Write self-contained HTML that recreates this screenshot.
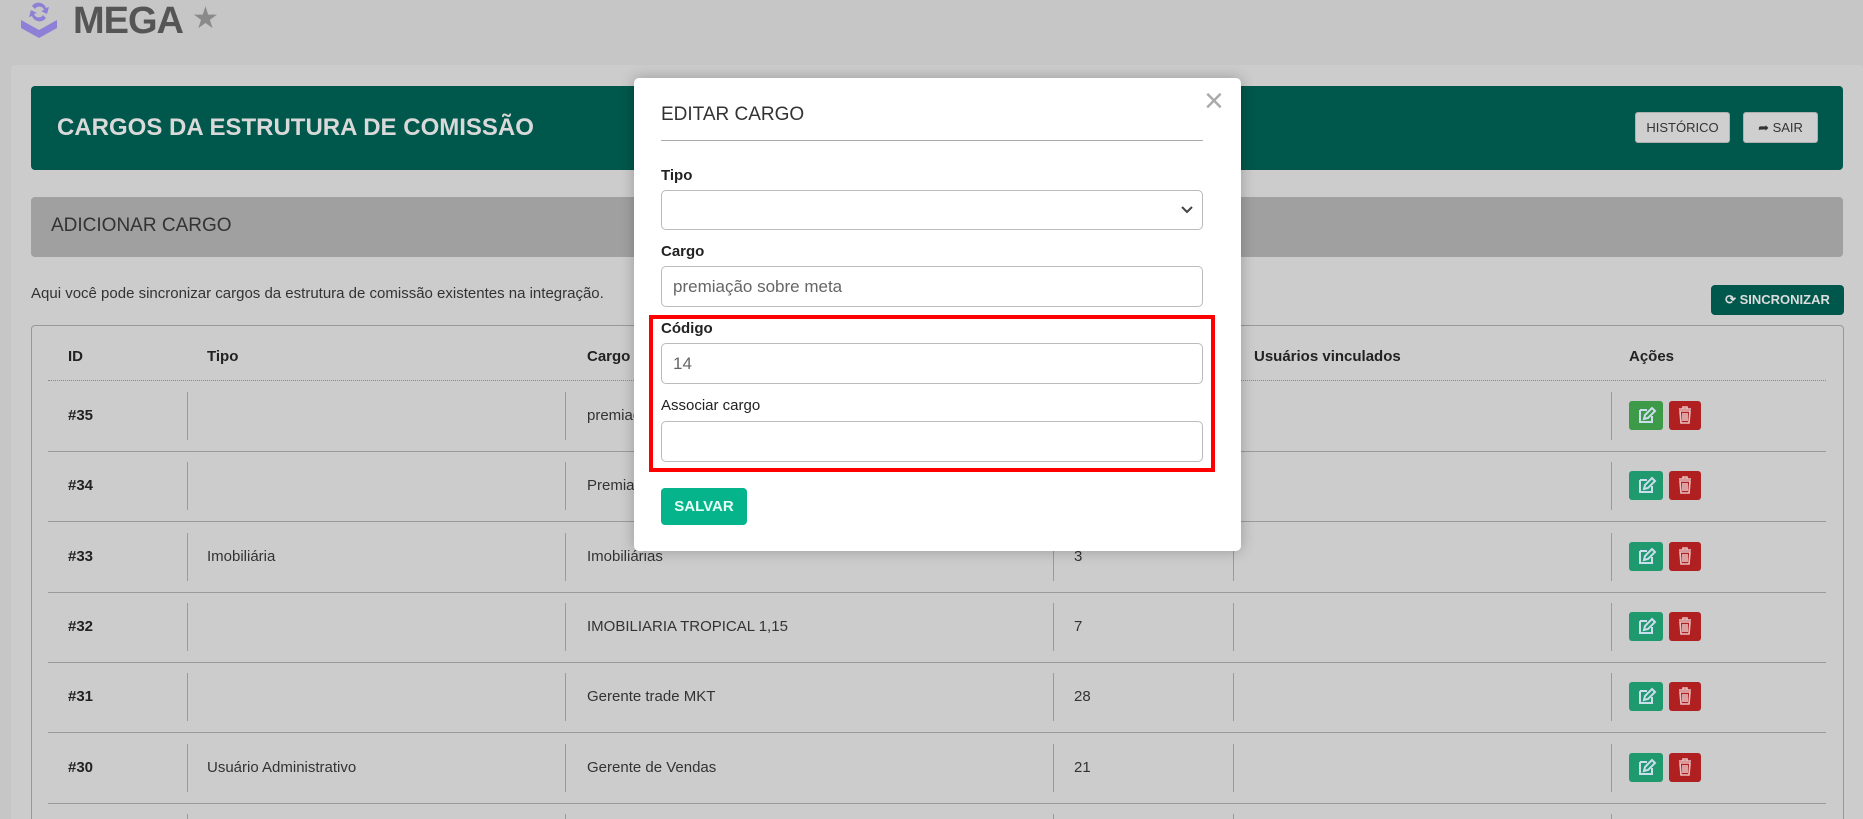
<!DOCTYPE html>
<html style="overflow:hidden;width:1863px;height:819px"><head><meta charset="utf-8"><style>
*{box-sizing:border-box;margin:0;padding:0}
body{width:1863px;height:819px;overflow:hidden;background:#c6c6c6;font-family:"Liberation Sans",sans-serif;position:relative}
.a{position:absolute}
.panel{left:11px;top:65px;width:1852px;height:754px;background:#cccccc;border-radius:4px 4px 0 0}
.hdr{left:31px;top:86px;width:1812px;height:84px;background:#00574b;border-radius:4px}
.btn{background:#cfcfcf;border:1px solid #b0b0b0;border-radius:3px;font-size:13px;color:#333;display:flex;align-items:center;justify-content:center}
.td{font-size:15px;color:#333}
.hd{font-size:15px;font-weight:bold;color:#222;top:348px}
.sep{left:48px;width:1778px;height:1px;background:#9a9a9a}
.vd{width:1px;background:#9a9a9a}
.ed{width:34px;height:29px;border-radius:3px;background:#1f9a6e}
.dl{width:32px;height:29px;border-radius:3px;background:#b02020}
.lbl{font-size:15px;font-weight:bold;color:#222;left:661px}
.inp{left:661px;width:542px;height:41px;border:1px solid #bbb;border-radius:5px;background:#fff;font-size:17px;color:#666;padding:10px 11px}
</style></head><body>
<svg class="a" style="left:18px;top:2px" width="42" height="36" viewBox="0 0 42 36"><path d="M3 18 L21 28 L39 18 L39 26 L21 36 L3 26Z" fill="#8d80d6"/><path d="M14 4 a8 8 0 0 1 14 2 l3-1 -2 7 -6-3 3-1 a5 5 0 0 0-9-1z M28 16 a8 8 0 0 1-14-2 l-3 1 2-7 6 3-3 1 a5 5 0 0 0 9 1z" fill="#8d80d6"/></svg>
<div class="a" style="left:73px;top:0px;font-size:38px;font-weight:bold;color:#555;letter-spacing:-1px">MEGA</div>
<div class="a" style="left:192px;top:1px;font-size:30px;color:#8a8a8a">★</div>
<div class="a panel"></div>
<div class="a hdr"></div>
<div class="a" style="left:57px;top:114px;font-size:24px;font-weight:bold;color:#d9d9d9">CARGOS DA ESTRUTURA DE COMISSÃO</div>
<div class="a btn" style="left:1635px;top:112px;width:95px;height:31px">HISTÓRICO</div>
<div class="a btn" style="left:1743px;top:112px;width:75px;height:31px">➦&nbsp;SAIR</div>
<div class="a" style="left:31px;top:197px;width:1812px;height:60px;background:#a0a0a0;border-radius:4px"></div>
<div class="a" style="left:51px;top:215px;font-size:19px;color:#333">ADICIONAR CARGO</div>
<div class="a" style="left:31px;top:285px;font-size:15px;color:#333">Aqui você pode sincronizar cargos da estrutura de comissão existentes na integração.</div>
<div class="a" style="left:1711px;top:285px;width:133px;height:30px;background:#00574b;border-radius:4px;color:#ddd;font-size:13px;font-weight:bold;display:flex;align-items:center;justify-content:center">⟳&nbsp;SINCRONIZAR</div>
<div class="a" style="left:31px;top:325px;width:1813px;height:500px;border:1px solid #999;border-radius:4px"></div>
<div class="a hd" style="left:68px">ID</div>
<div class="a hd" style="left:207px">Tipo</div>
<div class="a hd" style="left:587px">Cargo</div>
<div class="a hd" style="left:1254px">Usuários vinculados</div>
<div class="a hd" style="left:1629px">Ações</div>
<div class="a" style="left:48px;top:380px;width:1778px;border-top:1px dotted #888"></div>
<div id="rows"></div>
<script>
var d=[["#35","","premiação sobre meta",""],["#34","","Premiação",""],["#33","Imobiliária","Imobiliárias","3"],["#32","","IMOBILIARIA TROPICAL 1,15","7"],["#31","","Gerente trade MKT","28"],["#30","Usuário Administrativo","Gerente de Vendas","21"]];
var h="";for(var i=0;i<6;i++){var t=381+i*70.3;var c=t+35;
h+='<div class="a sep" style="top:'+Math.round(t+70)+'px"></div>';
[187,565,1053,1233,1611].forEach(function(x){h+='<div class="a vd" style="left:'+x+'px;top:'+Math.round(t+11)+'px;height:48px"></div>'});
h+='<div class="a td" style="left:68px;top:'+Math.round(c-9)+'px;font-weight:bold;color:#222">'+d[i][0]+'</div>';
h+='<div class="a td" style="left:207px;top:'+Math.round(c-9)+'px">'+d[i][1]+'</div>';
h+='<div class="a td" style="left:587px;top:'+Math.round(c-9)+'px">'+d[i][2]+'</div>';
h+='<div class="a td" style="left:1074px;top:'+Math.round(c-9)+'px">'+d[i][3]+'</div>';
h+='<div class="a ed" style="left:1629px;top:'+Math.round(c-15)+'px;'+(i==0?'background:#3d9a48':'')+'"><svg width="34" height="29" viewBox="0 0 34 29"><path d="M11 9h7M11 9v12h12v-6M15 18l1-4 7-7 3 3-7 7z" stroke="#cde" stroke-width="2" fill="none"/></svg></div>';
h+='<div class="a dl" style="left:1669px;top:'+Math.round(c-15)+'px"><svg width="32" height="29" viewBox="0 0 32 29"><path d="M10 8h12M14 8V6h4v2M11 10h10l-1 12h-8z M14 12v8M16 12v8M18 12v8" stroke="#e8c0c0" stroke-width="1.6" fill="none"/></svg></div>';
}
[187,565,1053,1233,1611].forEach(function(x){h+='<div class="a vd" style="left:'+x+'px;top:814px;height:10px"></div>'});
document.getElementById("rows").innerHTML=h;
</script>
<div class="a" style="left:634px;top:78px;width:607px;height:473px;background:#fff;border-radius:5px;box-shadow:0 0 14px rgba(0,0,0,.25)"></div>
<div class="a" style="left:1204px;top:84px;font-size:34px;color:#aaa;line-height:1">×</div>
<div class="a" style="left:661px;top:104px;font-size:19px;color:#333">EDITAR CARGO</div>
<div class="a" style="left:661px;top:140px;width:542px;height:1px;background:#aaa"></div>
<div class="a lbl" style="top:167px">Tipo</div>
<div class="a inp" style="top:190px;height:40px"></div>
<svg class="a" style="left:1180px;top:204px" width="14" height="12"><path d="M2 3l5 5 5-5" stroke="#444" stroke-width="2" fill="none"/></svg>
<div class="a lbl" style="top:243px">Cargo</div>
<div class="a inp" style="top:266px">premiação sobre meta</div>
<div class="a" style="left:649px;top:315px;width:566px;height:157px;border:4px solid #f00"></div>
<div class="a lbl" style="top:320px">Código</div>
<div class="a inp" style="top:343px">14</div>
<div class="a lbl" style="top:397px;font-weight:normal">Associar cargo</div>
<div class="a inp" style="top:421px"></div>
<div class="a" style="left:661px;top:488px;width:86px;height:37px;background:#05b48b;border-radius:4px;color:#e6fff6;font-size:15px;font-weight:bold;display:flex;align-items:center;justify-content:center">SALVAR</div>
</body></html>
